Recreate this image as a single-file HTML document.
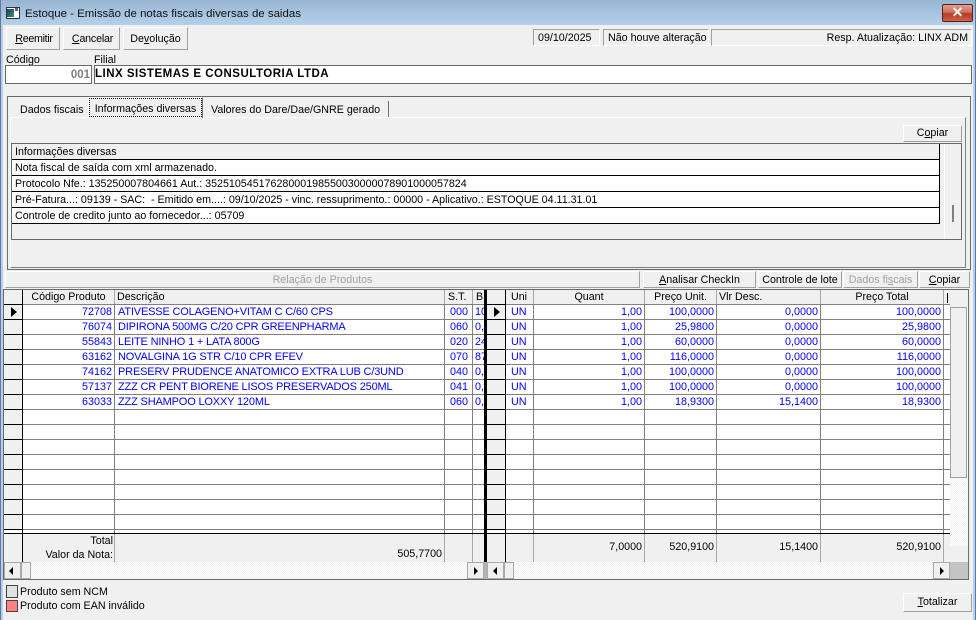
<!DOCTYPE html>
<html><head><meta charset="utf-8"><title>Estoque</title>
<style>
html,body{margin:0;padding:0}
body{width:976px;height:620px;position:relative;overflow:hidden;background:#f0f0f0;font:10.7px/14px "Liberation Sans",sans-serif;color:#000}
div,span.a{position:absolute;white-space:nowrap;box-sizing:border-box}
u{text-decoration:underline}
.btn{background:#f0f0f0;border:1px solid;border-color:#fff #a0a0a0 #a0a0a0 #fff;text-align:center}
.sunk{border:1px solid;border-color:#a0a0a0 #fff #fff #a0a0a0}
.in{background:#fff;border:1px solid #696969}
.tl{border-bottom:1px solid #000;left:12px;width:928px;height:16px;background:#fff;padding-left:3px;line-height:16px}
.r{position:absolute;left:4px;width:946px;height:15px;border-bottom:1px solid #808080;background:#fff;color:#00f;font-size:10.8px}
.r div{top:0;height:15px;line-height:15px;overflow:hidden}
.r .c0{left:0;width:19px;background:#f0f0f0;border-bottom:1px solid #000}
.c1{left:19px;width:91px;text-align:right;padding-right:2px}
.c2{left:113px;width:328px;padding-left:1px;font-size:11px;letter-spacing:-.17px}
.c3{left:441px;width:27px;padding-left:5px}
.c4{left:469px;width:12px;padding-left:2px}
.r .c5{left:483px;width:18px;background:#f0f0f0;border-bottom:1px solid #000}
.c6{left:502px;width:27px;padding-left:5px}
.c7{left:530px;width:110px;text-align:right;padding-right:2px}
.c8{left:641px;width:71px;text-align:right;padding-right:2px}
.c9{left:713px;width:103px;text-align:right;padding-right:2px}
.c10{left:817px;width:122px;text-align:right;padding-right:2px}
.v{position:absolute;top:290px;height:272px;width:1px;background:linear-gradient(#a9a9a9 0,#a9a9a9 14px,#808080 14px,#808080 243px,#a9a9a9 243px)}
.hd{top:290px;height:14px;line-height:15px;background:#f0f0f0;text-align:center}
.vb{width:1px;background:#000;top:290px;height:272px}
.arr{width:0;height:0;border:4px solid transparent}
.sbt{background:#f0f0f0;border:1px solid #a9a9a9;top:562px;height:17px}
.chk{background:repeating-conic-gradient(#fff 0 25%,#f0f0f0 0 50%) 0 0/2px 2px}
.tt{top:534px;line-height:14px;text-align:right}
.tn{top:540px;line-height:15px;text-align:right}
</style></head><body>

<!-- window chrome -->
<div style="left:0;top:0;width:976px;height:25px;background:linear-gradient(#97b4d2,#b5d0ea)"></div>
<div style="left:0;top:25px;width:3px;height:595px;background:#b5d0ea"></div>
<div style="left:973px;top:25px;width:3px;height:595px;background:#b5d0ea"></div>
<div style="left:0;top:0;width:1px;height:620px;background:#5f7a96"></div>
<div style="left:975px;top:0;width:1px;height:620px;background:#5f7a96"></div>
<div style="left:3px;top:25px;width:970px;height:595px;background:#f0f0f0"></div>

<!-- title icon -->
<div style="left:6px;top:7px;width:14px;height:12px;background:#fff;border:1px solid #333"></div>
<div style="left:7px;top:9px;width:7px;height:8px;background:linear-gradient(135deg,#1d3f6e,#3f8f6d)"></div>
<div style="left:15px;top:8px;width:3px;height:3px;background:#666"></div>
<div style="left:25px;top:6px;font-size:11.45px;line-height:16px;color:#111">Estoque - Emissão de notas fiscais diversas de saidas</div>

<!-- close -->
<div style="left:942px;top:4px;width:31px;height:18px;border:1px solid #5c1f18;border-radius:2px;background:linear-gradient(#e0a090 0,#d0705c 45%,#b83a24 55%,#d0604a 100%)"></div>
<div style="left:942px;top:4px;width:31px;height:18px;text-align:center;color:#fff;font:bold 14px/17px 'Liberation Sans',sans-serif">✕</div>

<!-- toolbar -->
<div class="btn" style="left:6px;top:27px;width:54px;height:23px;line-height:22px;letter-spacing:-.3px;padding-left:2px"><u>R</u>eemitir</div>
<div class="btn" style="left:63px;top:27px;width:57px;height:23px;line-height:22px;letter-spacing:-.2px;padding-left:2px"><u>C</u>ancelar</div>
<div class="btn" style="left:123px;top:27px;width:65px;height:23px;line-height:22px">De<u>v</u>olução</div>

<div class="sunk" style="left:533px;top:29px;width:67px;height:17px;padding-left:4px;line-height:16px">09/10/2025</div>
<div class="sunk" style="left:603px;top:29px;width:106px;height:17px;padding-left:4px;line-height:16px">Não houve alteração</div>
<div class="sunk" style="left:711px;top:29px;width:261px;height:17px;padding-right:3px;line-height:16px;text-align:right">Resp. Atualização: LINX ADM</div>

<!-- codigo filial -->
<div style="left:6px;top:53px">Código</div>
<div style="left:94px;top:53px">Filial</div>
<div class="in" style="left:5px;top:65px;width:87px;height:19px;text-align:right;padding-right:1px;font-size:11.5px;font-weight:bold;color:#808080;line-height:18px">001</div>
<div class="in" style="left:94px;top:65px;width:878px;height:19px;padding-left:0;font-size:11.5px;font-weight:bold;line-height:17px;letter-spacing:.5px">LINX SISTEMAS E CONSULTORIA LTDA</div>

<!-- tabs panel -->
<div style="left:7px;top:96px;width:964px;height:174px;border:1px solid #696969"></div>
<div style="left:10px;top:117px;width:956px;height:151px;border:1px solid;border-color:#fff #808080 #808080 #fff;background:#f0f0f0"></div>
<div style="left:20px;top:103px">Dados fiscais</div>
<div style="left:88px;top:97px;width:115px;height:21px;background:#f0f0f0;border-top:1px solid #fff;border-left:1px solid #fff;border-right:1px solid #707070"></div>
<div style="left:89px;top:98px;width:113px;height:19px;border:1px dotted #000;line-height:20px;text-align:center">Informações diversas</div>
<div style="left:211px;top:103px">Valores do Dare/Dae/GNRE gerado</div>
<div style="left:388px;top:101px;width:1px;height:16px;background:#707070"></div>

<div class="btn" style="left:903px;top:125px;width:59px;height:17px;line-height:15px">C<u>o</u>piar</div>

<!-- info grid -->
<div style="left:11px;top:143px;width:951px;height:97px;border:1px solid #696969;background:#f0f0f0"></div>
<div class="tl" style="top:144px;background:#f0f0f0">Informações diversas</div>
<div class="tl" style="top:160px">Nota fiscal de saída com xml armazenado.</div>
<div class="tl" style="top:176px">Protocolo Nfe.: 135250007804661 Aut.: 35251054517628000198550030000078901000057824</div>
<div class="tl" style="top:192px">Pré-Fatura...: 09139 - SAC:&nbsp; - Emitido em....: 09/10/2025 - vinc. ressuprimento.: 00000 - Aplicativo.: ESTOQUE 04.11.31.01</div>
<div class="tl" style="top:208px">Controle de credito junto ao fornecedor...: 05709</div>
<div style="left:939px;top:144px;width:1px;height:80px;background:#000"></div>
<div style="left:944px;top:144px;width:1px;height:95px;background:#fff"></div>
<div style="left:952px;top:205px;width:2px;height:17px;background:#808080"></div>

<!-- relacao bar -->
<div style="left:5px;top:271px;width:635px;height:17px;border:1px solid;border-color:#fff #a0a0a0 #a0a0a0 #fff;text-align:center;color:#a0a0a0;line-height:16px">Relação de Produtos</div>
<div class="btn" style="left:643px;top:271px;width:113px;height:17px;line-height:16px"><u>A</u>nalisar CheckIn</div>
<div class="btn" style="left:758px;top:271px;width:84px;height:17px;line-height:16px">Controle de lote</div>
<div class="btn" style="left:843px;top:271px;width:75px;height:17px;line-height:16px;color:#a0a0a0">Dados fi<u>s</u>cais</div>
<div class="btn" style="left:919px;top:271px;width:51px;height:17px;line-height:16px"><u>C</u>opiar</div>

<!-- grid -->
<div style="left:3px;top:289px;width:966px;height:291px;border:1px solid #696969;background:#fff"></div>

<div class="r" style="top:305px"><div class="c0"></div><div class="c1">72708</div><div class="c2">ATIVESSE COLAGENO+VITAM C C/60 CPS</div><div class="c3">000</div><div class="c4">10</div><div class="c5"></div><div class="c6">UN</div><div class="c7">1,00</div><div class="c8">100,0000</div><div class="c9">0,0000</div><div class="c10">100,0000</div></div>
<div class="r" style="top:320px"><div class="c0"></div><div class="c1">76074</div><div class="c2">DIPIRONA 500MG C/20 CPR GREENPHARMA</div><div class="c3">060</div><div class="c4">0,</div><div class="c5"></div><div class="c6">UN</div><div class="c7">1,00</div><div class="c8">25,9800</div><div class="c9">0,0000</div><div class="c10">25,9800</div></div>
<div class="r" style="top:335px"><div class="c0"></div><div class="c1">55843</div><div class="c2">LEITE NINHO 1 + LATA 800G</div><div class="c3">020</div><div class="c4">24</div><div class="c5"></div><div class="c6">UN</div><div class="c7">1,00</div><div class="c8">60,0000</div><div class="c9">0,0000</div><div class="c10">60,0000</div></div>
<div class="r" style="top:350px"><div class="c0"></div><div class="c1">63162</div><div class="c2">NOVALGINA 1G STR C/10 CPR EFEV</div><div class="c3">070</div><div class="c4">87</div><div class="c5"></div><div class="c6">UN</div><div class="c7">1,00</div><div class="c8">116,0000</div><div class="c9">0,0000</div><div class="c10">116,0000</div></div>
<div class="r" style="top:365px"><div class="c0"></div><div class="c1">74162</div><div class="c2">PRESERV PRUDENCE ANATOMICO EXTRA LUB C/3UND</div><div class="c3">040</div><div class="c4">0,</div><div class="c5"></div><div class="c6">UN</div><div class="c7">1,00</div><div class="c8">100,0000</div><div class="c9">0,0000</div><div class="c10">100,0000</div></div>
<div class="r" style="top:380px"><div class="c0"></div><div class="c1">57137</div><div class="c2">ZZZ CR PENT BIORENE LISOS PRESERVADOS 250ML</div><div class="c3">041</div><div class="c4">0,</div><div class="c5"></div><div class="c6">UN</div><div class="c7">1,00</div><div class="c8">100,0000</div><div class="c9">0,0000</div><div class="c10">100,0000</div></div>
<div class="r" style="top:395px"><div class="c0"></div><div class="c1">63033</div><div class="c2">ZZZ SHAMPOO LOXXY 120ML</div><div class="c3">060</div><div class="c4">0,</div><div class="c5"></div><div class="c6">UN</div><div class="c7">1,00</div><div class="c8">18,9300</div><div class="c9">15,1400</div><div class="c10">18,9300</div></div>
<div class="r" style="top:410px"><div class="c0"></div><div class="c5"></div></div>
<div class="r" style="top:425px"><div class="c0"></div><div class="c5"></div></div>
<div class="r" style="top:440px"><div class="c0"></div><div class="c5"></div></div>
<div class="r" style="top:455px"><div class="c0"></div><div class="c5"></div></div>
<div class="r" style="top:470px"><div class="c0"></div><div class="c5"></div></div>
<div class="r" style="top:485px"><div class="c0"></div><div class="c5"></div></div>
<div class="r" style="top:500px"><div class="c0"></div><div class="c5"></div></div>
<div class="r" style="top:515px"><div class="c0"></div><div class="c5"></div></div>

<!-- header -->
<div style="left:4px;top:290px;width:946px;height:15px;background:#f0f0f0;border-bottom:1px solid #808080"></div>
<div class="hd" style="left:23px;width:91px">Código Produto</div>
<div class="hd" style="left:117px;text-align:left">Descrição</div>
<div class="hd" style="left:448px">S.T.</div>
<div class="hd" style="left:476px">B</div>
<div class="hd" style="left:511px">Uni</div>
<div class="hd" style="left:534px;width:110px">Quant</div>
<div class="hd" style="left:645px;width:71px">Preço Unit.</div>
<div class="hd" style="left:719px">Vlr Desc.</div>
<div class="hd" style="left:821px;width:122px">Preço Total</div>
<div style="left:947px;top:293px;width:1px;height:10px;background:#000"></div>

<!-- footer area -->
<div style="left:4px;top:533px;width:946px;height:29px;background:#f0f0f0;border-top:1px solid #000"></div>
<div style="left:4px;top:529px;width:946px;height:4px;background:#fff;border-top:1px solid #808080"></div>
<div class="tt" style="left:23px;width:90px">Total<br>Valor da Nota:</div>
<div class="tt" style="left:300px;width:142px;top:547px">505,7700</div>
<div class="tn" style="left:534px;width:108px">7,0000</div>
<div class="tn" style="left:645px;width:69px">520,9100</div>
<div class="tn" style="left:717px;width:101px">15,1400</div>
<div class="tn" style="left:821px;width:120px">520,9100</div>

<!-- column separators -->
<div class="v" style="left:114px"></div>
<div class="v" style="left:444px"></div>
<div class="v" style="left:472px"></div>
<div class="v" style="left:533px"></div>
<div class="v" style="left:644px"></div>
<div class="v" style="left:716px"></div>
<div class="v" style="left:820px"></div>
<div class="v" style="left:943px"></div>
<div class="vb" style="left:22px"></div>
<div class="vb" style="left:505px"></div>
<div style="left:484px;top:290px;width:3px;height:272px;background:#000"></div>
<div style="left:4px;top:533px;width:946px;height:1px;background:#000"></div>
<div style="left:4px;top:529px;width:19px;height:1px;background:#000"></div>
<div style="left:487px;top:529px;width:19px;height:1px;background:#000"></div>
<div style="left:4px;top:304px;width:19px;height:1px;background:#000"></div>
<div style="left:487px;top:304px;width:19px;height:1px;background:#000"></div>

<!-- row indicators -->
<div class="arr" style="left:11px;top:307px;border-left:6px solid #000;border-right:0;border-top-width:5px;border-bottom-width:5px"></div>
<div class="arr" style="left:494px;top:307px;border-left:6px solid #000;border-right:0;border-top-width:5px;border-bottom-width:5px"></div>

<!-- vertical scrollbar -->
<div style="left:950px;top:290px;width:18px;height:17px;background:#f0f0f0"></div>
<div class="chk" style="left:950px;top:477px;width:18px;height:69px"></div>
<div style="left:950px;top:546px;width:18px;height:16px;background:#f0f0f0"></div>
<div style="left:950px;top:307px;width:17px;height:171px;background:#f0f0f0;border:1px solid #a0a0a0"></div>

<!-- horizontal scrollbars -->
<div class="chk" style="left:4px;top:562px;width:964px;height:17px"></div>
<div class="sbt" style="left:4px;width:17px"></div>
<div class="arr" style="left:9px;top:567px;border-right:4px solid #000;border-left:0;border-top-width:4px;border-bottom-width:4px"></div>
<div class="sbt" style="left:21px;width:10px"></div>
<div class="sbt" style="left:467px;width:17px"></div>
<div class="arr" style="left:474px;top:567px;border-left:4px solid #000;border-right:0;border-top-width:4px;border-bottom-width:4px"></div>
<div style="left:484px;top:562px;width:3px;height:17px;background:#b4b4b4"></div>
<div class="sbt" style="left:487px;width:17px"></div>
<div class="arr" style="left:493px;top:567px;border-right:4px solid #000;border-left:0;border-top-width:4px;border-bottom-width:4px"></div>
<div class="sbt" style="left:504px;width:10px"></div>
<div class="sbt" style="left:933px;width:17px"></div>
<div class="arr" style="left:940px;top:567px;border-left:4px solid #000;border-right:0;border-top-width:4px;border-bottom-width:4px"></div>
<div style="left:950px;top:562px;width:18px;height:17px;background:#c4c4c4"></div>

<!-- legend -->
<div style="left:6px;top:585px;width:12px;height:13px;background:#e0e0e0;border:1px solid #444"></div>
<div style="left:20px;top:585px">Produto sem NCM</div>
<div style="left:6px;top:600px;width:12px;height:12px;background:#ff8080;border:1px solid #444"></div>
<div style="left:20px;top:599px">Produto com EAN inválido</div>

<div class="btn" style="left:903px;top:593px;width:69px;height:19px;line-height:17px"><u>T</u>otalizar</div>
</body></html>
